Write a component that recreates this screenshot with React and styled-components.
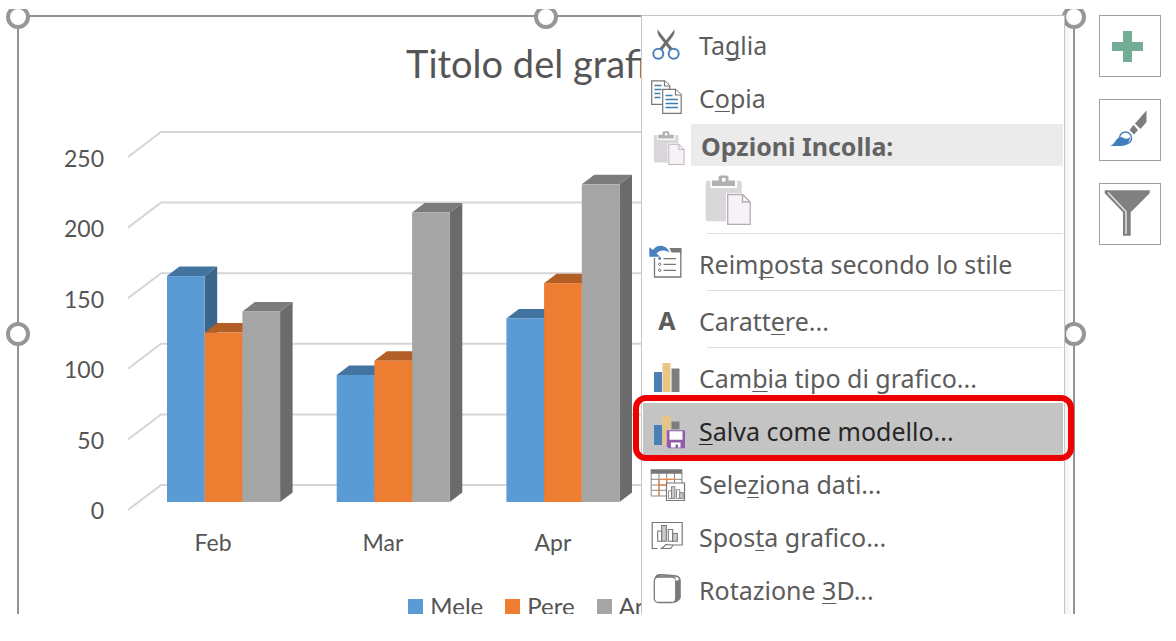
import styled, { createGlobalStyle, css } from "styled-components";

const months = [
  { name: "Feb", values: [160, 120, 135] },
  { name: "Mar", values: [90, 100, 205] },
  { name: "Apr", values: [130, 155, 225] },
];

const series = [
  { name: "Mele", front: "#5b9bd5", top: "#4374a0", side: "#3b658b" },
  { name: "Pere", front: "#ed7d31", top: "#b35e25", side: "#9b5120" },
  { name: "Arance", front: "#a5a5a5", top: "#7c7c7c", side: "#6b6b6b" },
];

const ticks = [250, 200, 150, 100, 50, 0];

const plot = {
  width: 883,
  height: 404,
  step: 169.7,
  offset: 39,
  bar: 37.7,
  base: 382,
  unit: 1.412,
  dx: 12.5,
  dy: 9.5,
};

const Bar = ({ x, value, color }) => {
  const { bar, base, unit, dx, dy } = plot;
  const y = base - value * unit;
  const right = x + bar;
  return (
    <g>
      <path
        fill={color.top}
        d={`M${x} ${y}l${dx} ${-dy}h${bar}l${-dx} ${dy}z`}
      />
      <path
        fill={color.side}
        d={`M${right} ${y}l${dx} ${-dy}V${base - dy}L${right} ${base}z`}
      />
      <rect x={x} y={y} width={bar} height={base - y} fill={color.front} />
    </g>
  );
};

const Plot = () => (
  <PlotSvg viewBox={`0 0 ${plot.width} ${plot.height}`} aria-hidden="true">
    {ticks.map((tick) => {
      const y = 365 - tick * plot.unit;
      return (
        <path
          key={tick}
          d={`M0 ${y + 25}L33 ${y}H${plot.width}`}
          fill="none"
          stroke="#d6d6d6"
          strokeWidth="2"
        />
      );
    })}
    {months.map(({ name, values }, month) =>
      values.map((value, index) => (
        <Bar
          key={name + index}
          x={plot.offset + month * plot.step + index * plot.bar}
          value={value}
          color={series[index]}
        />
      ))
    )}
  </PlotSvg>
);

const CutIcon = () => (
  <Icon viewBox="0 0 36 35">
    <path d="M8.5 3.5c-.5 4 1 6 3 8.500l9.500 12.500 2.500-2z" fill="#6e6e6e" />
    <path d="M25.500 3.500c.5 4-1 6-3 8.500l-9.500 12.500-2.500-2z" fill="#6e6e6e" />
    <circle cx="9.300" cy="27.700" r="5" fill="#fff" stroke="#4a80bd" strokeWidth="2" />
    <circle cx="24.700" cy="27.700" r="5" fill="#fff" stroke="#4a80bd" strokeWidth="2" />
  </Icon>
);

const CopyIcon = () => (
  <Icon viewBox="0 0 36 35">
    <g fill="#fff" stroke="#777" strokeWidth="1.200">
      <path d="M2.700 1.800h13l5 5v18.500h-18z" />
      <path d="M15.500 1.800v5.200h5.200" />
      <path d="M13.700 10.300h13l5.500 5.500v18.500h-18.500z" />
      <path d="M26.500 10.300v5.700h5.700" />
    </g>
    <path
      d="M5.500 6.500h7M5.500 10.500h7M5.500 14.500h6M5.500 18.500h6M16.500 16.500h7M16.500 20.500h12.500M16.500 24.500h12.500M16.500 28.500h12.500"
      stroke="#3f7fae"
      strokeWidth="1.300"
    />
  </Icon>
);

const PasteIcon = ({ width, height }) => (
  <svg width={width} height={height} viewBox="0 0 46 50" aria-hidden="true">
    <rect x=".7" y="5.700" width="36" height="40.600" rx="2" fill="#dad7da" />
    <path d="M5.500 4h26.500v9H5.500z" fill="#fff" />
    <path d="M7 5.500h6.500V2.500q0-2 2-2h6q2 0 2 2v3H30V11H7z" fill="#b3b1b3" />
    <rect x="17" y="3" width="3.500" height="3.500" fill="#fff" />
    <path d="M21 18h17l8 8v24H21z" fill="#fff" />
    <path
      d="M22.700 19.500h15l7.500 7.500v22.300H22.700z"
      fill="#f6f2f7"
      stroke="#b3adb3"
      strokeWidth="1.300"
    />
    <path d="M37.500 19.500V27h7.500" fill="none" stroke="#b3adb3" strokeWidth="1.300" />
  </svg>
);

const ResetIcon = () => (
  <Icon viewBox="0 0 36 35">
    <path d="M5.500 13v19h26.300V6" fill="none" stroke="#777" strokeWidth="1.300" />
    <path d="M20.500 3h12v4.500h-10z" fill="#777" />
    <path d="M.3 2.300v9.500H11L7.500 8.500c3-3.500 7-4 13-1.500C17-.5 8.500-1.500 3.800 5z" fill="#4a80bd" />
    <circle cx="10.700" cy="13.500" r="1.400" fill="#4a80bd" />
    <circle cx="10.700" cy="19.300" r="1.200" fill="none" stroke="#777" />
    <circle cx="10.700" cy="25.300" r="1.200" fill="none" stroke="#777" />
    <path d="M14.500 13.700h12.500M14.500 19.300h12.500M14.500 25.300h12.500" stroke="#777" strokeWidth="1.300" />
  </Icon>
);

const ChartIcon = () => (
  <Icon viewBox="0 0 36 35">
    <path d="M5 13h8v20H5z" fill="#4a80b5" />
    <path d="M13.500 4h8v29h-8z" fill="#e9c583" />
    <path d="M22.500 9.500h8V33h-8z" fill="#7d7d7d" />
  </Icon>
);

const SaveIcon = () => (
  <Icon viewBox="0 0 36 35">
    <path d="M5 13h8v20H5z" fill="#4a80b5" />
    <path d="M13.500 4h8v29h-8z" fill="#e9c583" />
    <path d="M22.500 9.500h8V33h-8z" fill="#7d7d7d" />
    <path d="M17 17.300h19.500v19.200H17z" fill="#c4c4c4" />
    <path d="M17.800 18.300H36v18H19.800l-2-2z" fill="#915bab" />
    <path d="M20.500 19.300h13v8.500h-13zM22 30.500h9.500v5H29v-3h-2.500v3H22z" fill="#fff" />
  </Icon>
);

const MiniBars = () => (
  <g stroke="#777" strokeWidth="1.100">
    <path d="M8.700 13h4v10.300h-4zM19.300 11.500h4.400v11.800h-4.400z" fill="#fff" />
    <path d="M12.700 7.500h4.600v15.800h-4.600zM23.700 15.500h4.600v7.800h-4.600z" fill="#ccc" />
  </g>
);

const DataIcon = () => (
  <Icon viewBox="0 0 36 35">
    <path d="M2.200 8v23H18M10 8v23M17.700 8v23M25.500 8v10M33 8v10M2 14.300h31M2 20h16M2 25.300h16" fill="none" stroke="#8a8a8a" />
    <path d="M10 14.300V31M10 14.300h16M10 20h8M17.700 14.300V20" fill="none" stroke="#e58b4e" strokeWidth="1.300" />
    <path d="M1.700 4.300h31.600v4.500H1.700z" fill="#777" />
    <path d="M17.500 18h18v17.500h-18z" fill="#fff" stroke="#777" strokeWidth="1.200" />
    <g transform="translate(13 16) scale(.75)">
      <MiniBars />
    </g>
  </Icon>
);

const MoveIcon = () => (
  <Icon viewBox="0 0 36 35">
    <path
      d="M8.500 30.500H3.200V4.500h30V27h-9l-2.500 3.500H12.500l4.500-4 7.500.500"
      fill="none"
      stroke="#777"
      strokeWidth="1.200"
    />
    <MiniBars />
  </Icon>
);

const RotateIcon = () => (
  <Icon viewBox="0 0 36 35">
    <path d="M5.300 9q.5-6 5-6h3l12 1q6.500 0 6.500 6v16q0 3-6 6z" fill="#7b7b7b" />
    <path d="M8 6l4-1.500 14 1 3 1-2 1z" fill="#bbb" />
    <rect x="5.300" y="6" width="21.500" height="25.500" rx="4" fill="#fff" stroke="#777" strokeWidth="1.300" />
    <circle cx="28" cy="8" r="1.800" fill="#fff" />
  </Icon>
);

const FontIcon = () => <Letter aria-hidden="true">A</Letter>;

const PlusIcon = () => (
  <svg width="60" height="60" aria-hidden="true">
    <path d="M23 15h9v11h11v9H32v11h-9V35H12v-9h11z" fill="#74ad96" />
  </svg>
);

const BrushIcon = () => (
  <svg width="60" height="60" aria-hidden="true">
    <path d="M46.500 10.500v11.500L40.500 29 35 23.500z" fill="#7d7d7d" />
    <path d="M33.500 25l4.500 5-4 4.500-4.500-4.500z" fill="#7d7d7d" />
    <circle cx="25.500" cy="38" r="6" fill="#fff" stroke="#4a80bd" strokeWidth="1.500" />
    <path d="M10 46c5-2 5-6 9-8.500 3-1.500 4 .5 6 1 3 .5 3 0 5-1.500-.5 6-4 9-9 9z" fill="#3f7dbd" />
  </svg>
);

const FunnelIcon = () => (
  <svg width="60" height="60" aria-hidden="true">
    <path d="M4.700 6.300h45v3l-19 19v23.400H23V28.300l-18.300-19z" fill="#808080" />
    <path d="M8 8.500l18 19V50" fill="none" stroke="#e3e3e3" strokeWidth="1.500" />
  </svg>
);

const Item = ({ icon, selected, children }) => (
  <MenuButton type="button" role="menuitem" $selected={selected}>
    <Slot>{icon}</Slot>
    <ItemText>{children}</ItemText>
  </MenuButton>
);

const ContextMenu = () => (
  <Menu role="menu">
    <Item icon={<CutIcon />}>
      Ta<u>g</u>lia
    </Item>
    <Item icon={<CopyIcon />}>
      C<u>o</u>pia
    </Item>
    <MenuHeader>
      <Slot $end>
        <PasteIcon width={32} height={34} />
      </Slot>
      <HeaderText>Opzioni Incolla:</HeaderText>
    </MenuHeader>
    <PasteButton type="button" role="menuitem" aria-label="Incolla">
      <PasteIcon width={46} height={50} />
    </PasteButton>
    <Separator />
    <Item icon={<ResetIcon />}>
      Reim<u>p</u>osta secondo lo stile
    </Item>
    <Separator />
    <Item icon={<FontIcon />}>
      Caratt<u>e</u>re...
    </Item>
    <Separator />
    <Item icon={<ChartIcon />}>
      Cam<u>b</u>ia tipo di grafico...
    </Item>
    <Item icon={<SaveIcon />} selected>
      <u>S</u>alva come modello...
    </Item>
    <Item icon={<DataIcon />}>
      Sele<u>z</u>iona dati...
    </Item>
    <Item icon={<MoveIcon />}>
      Spos<u>t</u>a grafico...
    </Item>
    <Item icon={<RotateIcon />}>
      Rotazione <u>3</u>D...
    </Item>
  </Menu>
);

export default function App() {
  return (
    <>
      <GlobalStyle />
      <Workspace>
        <ChartFrame>
          <Title>Titolo del grafico</Title>
          <PlotRow>
            <Axis>
              {ticks.map((tick) => (
                <span key={tick}>{tick}</span>
              ))}
            </Axis>
            <Plot />
          </PlotRow>
          <Categories>
            {months.map(({ name }) => (
              <span key={name}>{name}</span>
            ))}
          </Categories>
          <Legend>
            {series.map(({ name, front }) => (
              <LegendItem key={name} $color={front}>
                {name}
              </LegendItem>
            ))}
          </Legend>
          <Handles>
            <Handle $x="0%" $y="0%" />
            <Handle $x="50%" $y="0%" />
            <Handle $x="100%" $y="0%" />
            <Handle $x="0%" $y="50%" />
            <Handle $x="100%" $y="50%" />
          </Handles>
          <ContextMenu />
        </ChartFrame>
        <Tools>
          <ToolButton type="button" aria-label="Elementi grafico">
            <PlusIcon />
          </ToolButton>
          <ToolButton type="button" aria-label="Stili grafico">
            <BrushIcon />
          </ToolButton>
          <ToolButton type="button" aria-label="Filtri grafico">
            <FunnelIcon />
          </ToolButton>
        </Tools>
      </Workspace>
    </>
  );
}

const GlobalStyle = createGlobalStyle`
  * {
    box-sizing: border-box;
  }

  body {
    margin: 0;
    background-color: #fff;
    overflow: hidden;
  }
`;

const Workspace = styled.main`
  display: flex;
  align-items: flex-start;
  gap: 24px;
  height: calc(100vh - 36px);
  margin: 9px 0 27px;
  padding: 6px 15px 0 17px;
  overflow: hidden;
`;

const ChartFrame = styled.section`
  position: relative;
  flex: 1;
  min-width: 0;
  padding: 22px 0 28px;
  border: 2px solid #929292;
  font: 23px/28px Lato, sans-serif;
  color: #555;
`;

const Title = styled.h1`
  margin: 0 0 33px;
  font-size: 38px;
  font-weight: 400;
  line-height: 48px;
  text-align: center;
`;

const PlotRow = styled.div`
  display: flex;
  gap: 24px;
`;

const Axis = styled.div`
  display: flex;
  flex-direction: column;
  justify-content: space-between;
  width: 85px;
  padding-top: 24px;
  text-align: right;
`;

const PlotSvg = styled.svg`
  flex: none;
  width: 883px;
  height: 404px;
`;

const Categories = styled.div`
  display: grid;
  grid-template-columns: repeat(5, 170px);
  margin: 4px 0 36px 109px;
  text-align: center;
`;

const Legend = styled.div`
  display: flex;
  justify-content: center;
  gap: 22px;
  padding-left: 9px;
  font-size: 24px;
`;

const LegendItem = styled.span`
  display: flex;
  align-items: center;
  gap: 7px;

  &::before {
    content: "";
    width: 15px;
    height: 15px;
    background-color: ${({ $color }) => $color};
  }
`;

const Handles = styled.div`
  position: absolute;
  inset: -1px;
`;

const Handle = styled.span`
  position: absolute;
  top: ${({ $y }) => $y};
  left: ${({ $x }) => $x};
  width: 24px;
  height: 24px;
  margin: -11px -12px;
  border: 4px solid #969696;
  border-radius: 50%;
  background-color: #fff;
`;

const Menu = styled.div`
  position: absolute;
  top: -2px;
  right: 8px;
  width: 424px;
  padding: 1px 1px 20px;
  border: 1px solid #c6c6c6;
  background-color: #fff;
  box-shadow: 4px 0 4px rgba(0, 0, 0, 0.05);
  font: 25px/34px "Noto Sans", "Open Sans", sans-serif;
  color: #5c5c5c;

  u {
    text-decoration-thickness: 1px;
    text-underline-offset: 3px;
    text-decoration-skip-ink: none;
  }
`;

const MenuButton = styled.button`
  position: relative;
  display: flex;
  align-items: center;
  gap: 14px;
  width: 100%;
  height: 53px;
  padding: 0 0 0 6px;
  border: none;
  background-color: transparent;
  font: inherit;
  color: inherit;
  text-align: left;
  white-space: nowrap;

  ${({ $selected }) =>
    $selected &&
    css`
      background-color: #c4c4c4;
      color: #262626;

      &::after {
        content: "";
        position: absolute;
        inset: -8px -11px -5px -10px;
        border: 6px solid #ee0000;
        border-radius: 13px;
      }
    `}
`;

const ItemText = styled.span`
  padding-top: 3px;
`;

const Slot = styled.span`
  display: flex;
  flex: none;
  align-items: center;
  justify-content: ${({ $end }) => ($end ? "flex-end" : "center")};
  width: 36px;
`;

const Icon = styled.svg`
  width: 36px;
  height: 35px;
  overflow: visible;
`;

const Letter = styled.span`
  font-weight: 700;
`;

const MenuHeader = styled.div`
  display: flex;
  gap: 6px;
  height: 42px;
  margin-top: 1px;
  padding-left: 6px;

  svg {
    margin-top: 5px;
  }
`;

const HeaderText = styled.strong`
  flex: 1;
  padding-left: 10px;
  background-color: #ebebeb;
  line-height: 44px;
  color: #636363;
`;

const PasteButton = styled.button`
  display: block;
  height: 66px;
  margin-left: 62px;
  padding: 4px 0 0;
  border: none;
  background-color: transparent;
`;

const Separator = styled.div`
  height: 1px;
  margin: 1px 0 2px 64px;
  background-color: #dedede;
`;

const Tools = styled.div`
  display: flex;
  flex-direction: column;
  gap: 22px;
`;

const ToolButton = styled.button`
  width: 62px;
  height: 62px;
  padding: 0;
  border: 1px solid #a0a0a0;
  background-color: #fff;
`;
